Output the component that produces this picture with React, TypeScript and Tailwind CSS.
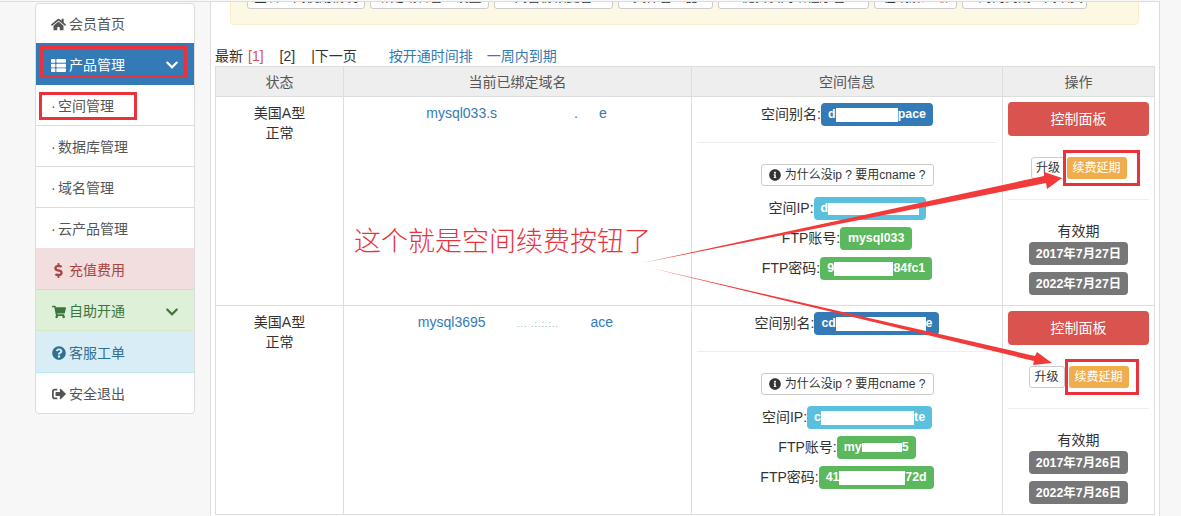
import type { ReactNode } from "react"
import { FaChevronDown, FaDollarSign, FaHome, FaInfoCircle, FaQuestionCircle, FaShoppingCart, FaSignOutAlt, FaThList } from "react-icons/fa"

const font = "font-['Liberation_Sans','Noto_Sans_CJK_SC',sans-serif]"

function SideItem({ icon, label, className = "", height = "h-[41px]", chevron }: { icon?: ReactNode; label: ReactNode; className?: string; height?: string; chevron?: ReactNode }) {
  return (
    <div className={`flex items-center justify-between border-b pt-[3px] pr-[15px] pl-[15px] text-[14px] ${height} ${className || "border-[#ddd]"}`}>
      <span className="flex items-center gap-[3px]">
        {icon && <span className="flex w-[15px] justify-center">{icon}</span>}
        {label}
      </span>
      {chevron}
    </div>
  )
}

function SubLabel({ text }: { text: string }) {
  return (
    <span className="flex">
      <span className="w-[7px]">·</span>
      {text}
    </span>
  )
}

// masked values: the white block hides part of the text, as in the screenshot
function Label({ left, right, color, width, maskH = "h-[14px]" }: { left: string; right?: string; color: string; width: string; maskH?: string }) {
  return (
    <span className={`inline-flex h-[23px] items-center justify-center rounded-[4px] px-[7px] text-[12.4px] font-bold text-white ${color} ${width}`}>
      {left}
      {right !== undefined && <span className={`flex-1 bg-white ${maskH}`} />}
      {right}
    </span>
  )
}

function InfoLine({ name, children }: { name: string; children: ReactNode }) {
  return (
    <div className="flex items-center justify-center text-[14px] text-[#333]">
      <span>{name}</span>
      {children}
    </div>
  )
}

const cols = "grid-cols-[128px_348px_311px_153px]"

function Row({ domain, alias, ip, ftp, pwd, start, end, gap, upgrade }: { domain: ReactNode; alias: ReactNode; ip: ReactNode; ftp: ReactNode; pwd: ReactNode; start: string; end: string; gap: string; upgrade: string }) {
  return (
    <div className={`grid h-[209px] border-b border-[#ddd] ${cols}`}>
      <div className="border-l border-[#ddd] pt-[6px] text-center text-[14px] leading-[20px] text-[#333]">
        美国A型
        <br />
        正常
      </div>
      <div className="border-l border-[#ddd] pt-[6px] text-center text-[14px] leading-[20px] text-[#337ab7]">{domain}</div>
      <div className="border-l border-[#ddd] px-[5px] pt-[6px]">
        <div className="h-[39px]">{alias}</div>
        <div className="border-t border-[#eee] pt-[21px]">
          <div className="flex justify-center">
            <span className="flex h-[22px] w-[173px] items-center justify-center gap-[4px] rounded-[3px] border border-[#ccc] text-[12px] whitespace-nowrap text-[#333]">
              <FaInfoCircle size={12} />
              为什么没ip ? 要用cname ?
            </span>
          </div>
          <div className="mt-[11px] flex flex-col gap-[7px]">
            {ip}
            {ftp}
            {pwd}
          </div>
        </div>
      </div>
      <div className="border-r border-l border-[#ddd] px-[5px] pt-[5px]">
        <div className="flex h-[34px] items-center justify-center rounded-[4px] bg-[#d9534f] text-[14px] text-white">控制面板</div>
        <div className={`flex h-[64px] items-center justify-center border-b border-[#eee] pt-[1px] ${gap}`}>
          <span className={`flex h-[22px] items-center justify-center rounded-[3px] border border-[#ccc] text-[12px] text-[#333] ${upgrade}`}>升级</span>
          <span className="flex h-[22px] w-[60px] items-center justify-center rounded-[3px] bg-[#f0ad4e] text-[12px] text-white">续费延期</span>
        </div>
        <div className="flex flex-col items-center pt-[21px] text-[14px] leading-[20px] text-[#333]">
          有效期
          <span className="mt-[1px] flex h-[23px] w-[99px] items-center justify-center rounded-[4px] bg-[#777] text-[12.4px] font-bold text-white">{start}</span>
          <span className="mt-[7px] flex h-[23px] w-[99px] items-center justify-center rounded-[4px] bg-[#777] text-[12.4px] font-bold text-white">{end}</span>
        </div>
      </div>
    </div>
  )
}

export default function App() {
  const topButtons = [
    { label: "查看空间使用情况", w: "w-[118px]" },
    { label: "绑定域名管理设置", w: "w-[119px]" },
    { label: "空间备份恢复管理", w: "w-[119px]" },
    { label: "文件管理器", w: "w-[95px]" },
    { label: "一键安装网站程序管理", w: "w-[151px]" },
    { label: "在线解压缩", w: "w-[83px]" },
    { label: "一周内到期空间续费", w: "w-[125px]" },
  ]

  return (
    <div className={`flex h-[516px] w-[1181px] overflow-hidden bg-[#f7f7f7] pt-[1px] ${font}`}>
      <aside className="w-[210px] shrink-0 border-t border-[#ddd] pt-[1px] pl-[35px]">
        <div className="w-[160px] overflow-hidden rounded-[4px] border border-[#ddd] bg-white text-[#555]">
          <SideItem height="h-[39px]" className="border-transparent" icon={<FaHome size={15} />} label="会员首页" />
          <SideItem height="h-[42px]" className="border-transparent bg-[#337ab7] text-white" icon={<FaThList size={15} />} label="产品管理" chevron={<FaChevronDown size={14} />} />
          <SideItem label={<SubLabel text="空间管理" />} />
          <SideItem label={<SubLabel text="数据库管理" />} />
          <SideItem label={<SubLabel text="域名管理" />} />
          <SideItem height="h-[40px]" className="border-transparent" label={<SubLabel text="云产品管理" />} />
          <SideItem height="h-[42px]" className="border-[#ebccd1] bg-[#f2dede] text-[#a94442]" icon={<FaDollarSign size={15} />} label="充值费用" />
          <SideItem className="border-[#d6e9c6] bg-[#dff0d8] text-[#3c763d]" icon={<FaShoppingCart size={14} />} label="自助开通" chevron={<FaChevronDown size={14} />} />
          <SideItem height="h-[42px]" className="border-[#bce8f1] bg-[#d9edf7] text-[#31708f]" icon={<FaQuestionCircle size={14} />} label="客服工单" />
          <SideItem height="h-[40px]" className="border-transparent" icon={<FaSignOutAlt size={14} />} label="安全退出" />
        </div>
      </aside>

      <main className="relative h-[515px] w-[950px] shrink-0 overflow-hidden border-t border-r border-l border-[#ddd] bg-white pl-[4px]">
        <div className="mt-[-34px] ml-[15px] flex h-[57px] w-[909px] items-end gap-[5px] rounded-[4px] border border-[#faebcc] bg-[#fcf8e3] pb-[15px] pl-[16px]">
          {topButtons.map((b) => (
            <span key={b.label} className={`flex h-[30px] items-end justify-center rounded-[3px] border border-[#ccc] bg-white pb-[3px] text-[13px] leading-[16px] whitespace-nowrap text-[#333] ${b.w}`}>
              {b.label}
            </span>
          ))}
        </div>

        <div className="mt-[22px] flex h-[19px] items-center text-[14px] leading-[19px] text-[#333]">
          <span>最新</span>
          <span className="ml-[5px] text-[#d9534f]">[1]</span>
          <span className="ml-[16px]">[2]</span>
          <span className="ml-[16px]">|下一页</span>
          <span className="ml-[32px] text-[#337ab7]">按开通时间排</span>
          <span className="ml-[14px] text-[#337ab7]">一周内到期</span>
        </div>

        <div className="w-[940px]">
          <div className={`grid h-[31px] border-y border-[#ddd] bg-[#eee] text-center text-[14px] leading-[30px] text-[#555] ${cols}`}>
            <div className="border-l border-[#ddd]">状态</div>
            <div className="border-l border-[#ddd]">当前已绑定域名</div>
            <div className="border-l border-[#ddd]">空间信息</div>
            <div className="border-r border-l border-[#ddd]">操作</div>
          </div>
          <Row
            domain={
              <span className="relative left-[-1px]">
                mysql033.s<span className="inline-block w-[77px]" />.<span className="inline-block w-[21px]" />e
              </span>
            }
            alias={<InfoLine name="空间别名:"><Label color="bg-[#337ab7]" width="w-[112px]" left="d" right="pace" /></InfoLine>}
            ip={<InfoLine name="空间IP:"><Label color="bg-[#5bc0de]" width="w-[112px]" left="d" right="" maskH="h-[12px]" /></InfoLine>}
            ftp={<InfoLine name="FTP账号:"><Label color="bg-[#5cb85c]" width="w-[72px]" left="mysql033" /></InfoLine>}
            pwd={<InfoLine name="FTP密码:"><Label color="bg-[#5cb85c]" width="w-[112px]" left="9" right="84fc1" /></InfoLine>}
            start="2017年7月27日"
            end="2022年7月27日"
            gap="gap-[1px]"
            upgrade="w-[35px]"
          />
          <Row
            domain={
              <span className="relative left-[-2px]">
                mysql3695
                <span className="inline-block w-[105px] text-center text-[9px] tracking-[1px] text-[#8aa]">... .:.:.:..</span>
                ace
              </span>
            }
            alias={<InfoLine name="空间别名:"><Label color="bg-[#337ab7]" width="w-[125px]" left="cd" right="e" /></InfoLine>}
            ip={<InfoLine name="空间IP:"><Label color="bg-[#5bc0de]" width="w-[125px]" left="c" right="te" /></InfoLine>}
            ftp={<InfoLine name="FTP账号:"><Label color="bg-[#5cb85c]" width="w-[79px]" left="my" right="5" maskH="h-[9px]" /></InfoLine>}
            pwd={<InfoLine name="FTP密码:"><Label color="bg-[#5cb85c]" width="w-[115px]" left="41" right="72d" /></InfoLine>}
            start="2017年7月26日"
            end="2022年7月26日"
            gap="gap-[4px]"
            upgrade="w-[36px]"
          />
        </div>
      </main>

      {/* annotation layer */}
      <div className="absolute top-[46px] left-[40px] h-[32px] w-[147px] border-[3px] border-[#e8323c]" />
      <div className="absolute top-[92px] left-[39px] h-[28px] w-[98px] border-[3px] border-[#e8323c]" />
      <div className="absolute top-[150px] left-[1063px] h-[36px] w-[77px] border-[3px] border-[#e8323c]" />
      <div className="absolute top-[359px] left-[1065px] h-[36px] w-[74px] border-[3px] border-[#e8323c]" />
      <div className="absolute top-[225px] left-[354px] text-[27px] leading-[34px] font-light whitespace-nowrap text-[#e8323c]">这个就是空间续费按钮了</div>
      <svg className="absolute top-0 left-0" width="1181" height="516" viewBox="0 0 1181 516" fill="#f23a3a">
        <polygon points="642,263 1044,176 1044,172 1062,178 1047,189 1046,183" />
        <polygon points="651,268 1035,356 1037,352 1052,363 1033,365 1034,361" />
      </svg>
    </div>
  )
}
